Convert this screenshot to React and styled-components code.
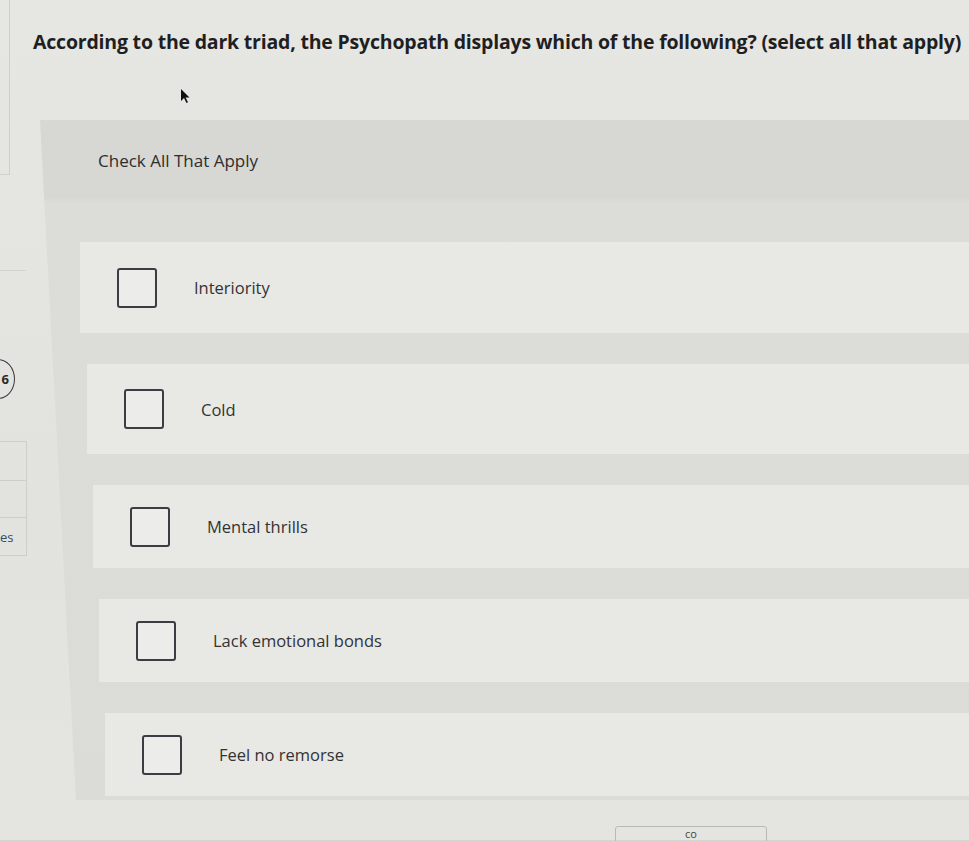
import React from "react";
import styled, { createGlobalStyle } from "styled-components";

const GlobalStyle = createGlobalStyle`
  html, body {
    margin: 0;
    padding: 0;
    background: #e4e4e1;
  }
  * { box-sizing: border-box; }
`;

const Page = styled.div`
  position: relative;
  width: 969px;
  height: 841px;
  overflow: hidden;
  display: flex;
  flex-direction: column;
  background: linear-gradient(180deg, #e6e6e3 0%, #e2e2df 60%, #e4e4e1 100%);
  font-family: "Open Sans", Lato, sans-serif;
`;

const Question = styled.h1`
  margin: 0;
  padding: 28px 0 0 33px;
  height: 120px;
  font-size: 19.5px;
  font-weight: 700;
  letter-spacing: -0.2px;
  color: #1f1f1f;
  white-space: nowrap;
`;

const Body = styled.div`
  display: flex;
  flex: 1;
`;

const Sidebar = styled.div`
  width: 40px;
  flex-shrink: 0;
  display: flex;
  flex-direction: column;
  margin-top: -120px;
`;

const SideFrame = styled.div`
  width: 10px;
  height: 175px;
  border-right: 1px solid #cfcfcc;
  border-bottom: 1px solid #cfcfcc;
`;

const SideRule = styled.div`
  width: 26px;
  margin-top: 95px;
  border-top: 1px solid #d2d2cf;
`;

const Badge = styled.div`
  width: 34px;
  height: 40px;
  margin: 88px 0 0 -19px;
  border: 1.5px solid #3a3a3a;
  border-radius: 50%;
  display: flex;
  align-items: center;
  justify-content: flex-end;
  padding-right: 5px;
  font-size: 13px;
  font-weight: 700;
  color: #2a2a2a;
`;

const SideStack = styled.div`
  width: 27px;
  margin-top: 42px;
  display: flex;
  flex-direction: column;
`;

const SideCell = styled.div`
  height: ${(p) => p.$h}px;
  border: 1px solid #cdcdca;
  border-left: none;
  border-top: ${(p) => (p.$first ? "1px solid #cdcdca" : "none")};
  display: flex;
  align-items: center;
  font-size: 13px;
  color: #3c4a5c;
  overflow: hidden;
`;

const Panel = styled.section`
  flex: 1;
  height: 680px;
  background: linear-gradient(180deg, #d7d7d4 0px, #d7d7d4 78px, #dcdcd9 82px, #dbdbd8 100%);
  clip-path: polygon(0 0, 100% 0, 100% 100%, 36px 100%);
  display: flex;
  flex-direction: column;
`;

const PanelHeader = styled.div`
  height: 80px;
  padding: 0 0 0 58px;
  display: flex;
  align-items: center;
  font-size: 17px;
  color: #2e2e2e;
`;

const Options = styled.div`
  display: flex;
  flex-direction: column;
  gap: 31px;
  padding-top: 42px;
`;

const Option = styled.label`
  height: ${(p) => p.$h}px;
  margin-left: ${(p) => p.$indent}px;
  padding-left: 37px;
  background: #e8e8e5;
  display: flex;
  align-items: center;
  gap: 37px;
  font-size: 16.5px;
  color: #333;
  cursor: pointer;
`;

const Box = styled.span`
  width: 40px;
  height: 40px;
  flex-shrink: 0;
  border: 2.5px solid #3a3d42;
  border-radius: 3px;
  background: #ececea;
`;

const Footer = styled.div`
  height: 41px;
  border-bottom: 1px solid #d5d5d2;
`;

const BottomTab = styled.div`
  position: absolute;
  left: 615px;
  top: 826px;
  width: 152px;
  height: 24px;
  border: 1px solid #b9b9b6;
  border-radius: 3px;
  display: flex;
  justify-content: center;
  padding-top: 1px;
  font-size: 11px;
  line-height: 12px;
  color: #444;
`;

const Cursor = styled.svg`
  position: absolute;
  left: 180px;
  top: 88px;
`;

const options = [
  { label: "Interiority", indent: 40, h: 91 },
  { label: "Cold", indent: 47, h: 90 },
  { label: "Mental thrills", indent: 53, h: 83 },
  { label: "Lack emotional bonds", indent: 59, h: 83 },
  { label: "Feel no remorse", indent: 65, h: 83 },
];

export default function App() {
  return (
    <>
      <GlobalStyle />
      <Page>
        <Question>
          According to the dark triad, the Psychopath displays which of the following? (select all that apply)
        </Question>
        <Body>
          <Sidebar>
            <SideFrame />
            <SideRule />
            <Badge>6</Badge>
            <SideStack>
              <SideCell $first $h={40} />
              <SideCell $h={37} />
              <SideCell $h={38}>es</SideCell>
            </SideStack>
          </Sidebar>
          <Panel>
            <PanelHeader>Check All That Apply</PanelHeader>
            <Options>
              {options.map((o) => (
                <Option key={o.label} $indent={o.indent} $h={o.h}>
                  <Box />
                  {o.label}
                </Option>
              ))}
            </Options>
          </Panel>
        </Body>
        <Footer />
        <BottomTab>co</BottomTab>
        <Cursor width="10" height="16" viewBox="0 0 10 16">
          <path d="M1 1 L1 13 L4 10 L6.5 15 L8 14.3 L5.6 9.4 L9.5 9.4 Z" fill="#111" />
        </Cursor>
      </Page>
    </>
  );
}
